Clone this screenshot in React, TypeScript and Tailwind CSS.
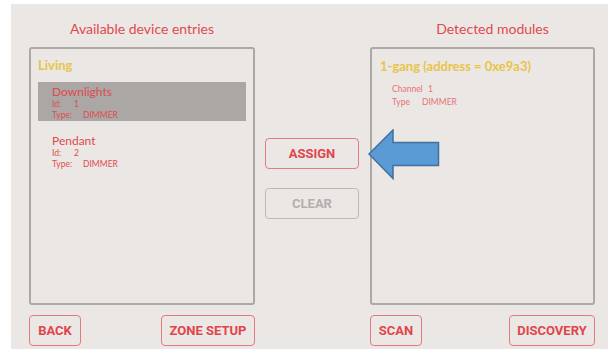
import React from "react";

const lato = { fontFamily: "Lato, 'Open Sans', sans-serif" } as React.CSSProperties;
const roboto = { fontFamily: "Roboto, 'Liberation Sans', sans-serif" } as React.CSSProperties;

function Btn({ label, w, gray }: { label: string; w: string; gray?: boolean }) {
  return (
    <div
      style={roboto}
      className={`${w} h-[31px] rounded-[4px] border flex items-center justify-center text-[13px] font-bold ${
        gray ? "border-[#bdb9b6] text-[#b3afac]" : "border-[#e6797c] text-[#e0454b]"
      }`}
    >
      {label}
    </div>
  );
}

function Entry({ name, id, hl }: { name: string; id: string; hl?: boolean }) {
  return (
    <div className={`mx-[7px] h-[39px] pt-[3px] pl-[14px] ${hl ? "bg-[#aaa7a5]" : ""}`}>
      <div className="text-[12px] leading-[14px] text-[#df4a4f]">{name}</div>
      <div className="text-[8.5px] leading-[10.5px] text-[#e04c50]">
        <span className="inline-block w-[22px]">Id:</span>
        {id}
      </div>
      <div className="text-[8.5px] leading-[10.5px] text-[#e04c50]">
        <span className="inline-block w-[31px]">Type:</span>DIMMER
      </div>
    </div>
  );
}

export default function App() {
  return (
    <div className="w-[608px] h-[352px] bg-white overflow-hidden">
      <div className="relative ml-[11px] mt-[4px] w-[597px] h-[345px] bg-[#ebe7e4] flex pl-[18px]" style={lato}>
        {/* left column */}
        <div className="w-[226px] flex flex-col">
          <div className="h-[43px] pt-[16px] leading-[18px] text-center text-[14px] text-[#df4a4f]">
            Available device entries
          </div>
          <div className="h-[258px] border-2 border-[#aca8a5] rounded-[3px] flex flex-col gap-[10px]">
            <div className="pl-[7px] pt-[8px] h-[23px] text-[13px] leading-[16px] font-bold text-[#e8c44a]">
              Living
            </div>
            <Entry name="Downlights" id="1" hl />
            <Entry name="Pendant" id="2" />
          </div>
          <div className="mt-[10px] flex justify-between">
            <Btn label="BACK" w="w-[52px]" />
            <Btn label="ZONE SETUP" w="w-[94px]" />
          </div>
        </div>
        {/* middle */}
        <div className="w-[115px] pl-[10px] pt-[134px] flex flex-col gap-[19px]">
          <Btn label="ASSIGN" w="w-[94px]" />
          <Btn label="CLEAR" w="w-[94px]" gray />
        </div>
        {/* right column */}
        <div className="w-[225px] flex flex-col">
          <div className="h-[43px] pt-[16px] pl-[20px] leading-[18px] text-center text-[14px] text-[#df4a4f]">
            Detected modules
          </div>
          <div className="h-[258px] border-2 border-[#aca8a5] rounded-[3px] flex flex-col">
            <div className="pl-[8px] pt-[9px] text-[13px] leading-[16px] font-bold text-[#e8c44a]">
              1-gang (address = 0xe9a3)
            </div>
            <div className="pl-[20px] pt-[9px] text-[8.5px] leading-[13px] text-[#e57378]">
              <div>
                <span className="inline-block w-[36px]">Channel</span>1
              </div>
              <div>
                <span className="inline-block w-[30px]">Type</span>DIMMER
              </div>
            </div>
          </div>
          <div className="mt-[10px] flex justify-between">
            <Btn label="SCAN" w="w-[52px]" />
            <Btn label="DISCOVERY" w="w-[86px]" />
          </div>
        </div>
        {/* arrow overlay */}
        <svg className="absolute left-[357px] top-[125px]" width="72" height="51" viewBox="0 0 72 51">
          <path
            d="M1 25 L25 1 L25 13.5 L70.5 13.5 L70.5 36.5 L25 36.5 L25 49.5 Z"
            fill="#5b9bd5"
            stroke="#41719c"
            strokeWidth="1.5"
            strokeLinejoin="miter"
          />
        </svg>
      </div>
    </div>
  );
}
